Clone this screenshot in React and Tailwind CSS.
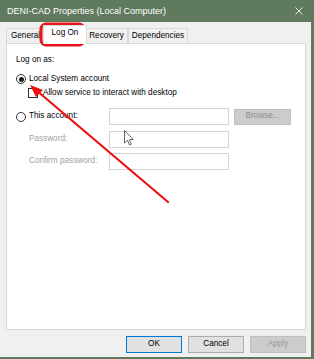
import React from 'react';

const font = { fontFamily: '"Liberation Sans", Arial, sans-serif' };

function Radio({ checked }) {
  return (
    <span className="w-[10px] h-[10px] rounded-full border border-[#333333] bg-white flex items-center justify-center shrink-0">
      {checked && <span className="w-[5px] h-[5px] rounded-full bg-[#1a1a1a]" />}
    </span>
  );
}

function Tab({ label, selected, w }) {
  if (selected) {
    return (
      <div className={`${w} h-[19px] -mx-[2px] -mb-px z-10 bg-white border border-b-0 border-[#d9d9d9] flex items-start justify-center pt-[3px] text-black`}>
        {label}
      </div>
    );
  }
  return (
    <div className={`${w} h-[15px] bg-[#f0f0f0] border border-b-0 border-[#d9d9d9] flex items-center justify-center text-black overflow-hidden whitespace-nowrap`}>
      {label}
    </div>
  );
}

function Button({ children, kind }) {
  const styles = {
    ok: 'border-[#0078d7] bg-[#e1e1e1] text-black',
    normal: 'border-[#adadad] bg-[#e1e1e1] text-black',
    off: 'border-[#bfbfbf] bg-[#cccccc] text-[#9a9a9a]',
  };
  return (
    <div className={`w-[56px] h-[17px] border flex items-center justify-center ${styles[kind]}`}>
      {children}
    </div>
  );
}

export default function App() {
  return (
    <div className="relative w-[314px] h-[359px] overflow-hidden bg-[#f0f0f0] border-r-[3px] border-b-[2px] border-[#5f7a5d] flex flex-col text-[8.2px] leading-none" style={font}>
      {/* title bar */}
      <div className="h-[22px] shrink-0 bg-[#5f7a5d] flex items-center justify-between pl-[7px] pr-[8px] text-[9px] text-white">
        <span>DENI-CAD Properties (Local Computer)</span>
        <svg width="8" height="8" viewBox="0 0 8 8" stroke="#e6ece6" strokeWidth="1">
          <path d="M0.5 0.5 L7.5 7.5 M7.5 0.5 L0.5 7.5" />
        </svg>
      </div>

      {/* tabs */}
      <div className="flex items-end h-[20px] mt-[1px] pl-[6px]">
        <Tab label="General" w="w-[39px]" />
        <Tab label="Log On" w="w-[44px]" selected />
        <Tab label="Recovery" w="w-[43px]" />
        <Tab label="Dependencies" w="w-[60px]" />
      </div>

      {/* panel */}
      <div className="ml-[6px] w-[300px] h-[287px] bg-white border border-[#d9d9d9] flex flex-col pl-[9px] text-black">
        <div className="h-[11px] mt-[11px] flex items-center">Log on as:</div>

        <div className="h-[10px] mt-[8px] flex items-center gap-[3px]">
          <Radio checked />
          <span>Local System account</span>
        </div>

        <div className="h-[10px] mt-[4px] ml-[12px] flex items-center gap-[5px]">
          <span className="w-[10px] h-[10px] border border-[#333333] bg-white shrink-0" />
          <span>Allow service to interact with desktop</span>
        </div>

        <div className="h-[17px] mt-[10px] flex items-center">
          <div className="w-[93px] flex items-center gap-[3px]">
            <Radio />
            <span>This account:</span>
          </div>
          <div className="w-[120px] h-[17px] border border-[#d4d4d4] bg-white" />
          <div className="ml-[5px] w-[57px] h-[16px] border border-[#bfbfbf] bg-[#cccccc] text-[#8c8c8c] flex items-center justify-center">
            Browse...
          </div>
        </div>

        <div className="h-[17px] mt-[6px] flex items-center">
          <span className="w-[93px] pl-[13px] text-[#a0a0a0]">Password:</span>
          <div className="w-[120px] h-[17px] border border-[#d4d4d4] bg-white" />
        </div>

        <div className="h-[17px] mt-[5px] flex items-center">
          <span className="w-[93px] pl-[13px] text-[#a0a0a0]">Confirm password:</span>
          <div className="w-[120px] h-[17px] border border-[#d4d4d4] bg-white" />
        </div>
      </div>

      {/* buttons */}
      <div className="mt-[6px] flex justify-end gap-[6px] pr-[5px]">
        <Button kind="ok">OK</Button>
        <Button kind="normal">Cancel</Button>
        <Button kind="off">Apply</Button>
      </div>

      {/* annotation overlay */}
      <svg className="absolute left-0 top-0 pointer-events-none" width="314" height="359" viewBox="0 0 314 359">
        <rect x="41" y="24" width="43" height="21" rx="5" fill="none" stroke="#e8141b" strokeWidth="3" />
        <line x1="168" y1="202" x2="36" y2="90" stroke="#f01010" strokeWidth="2.2" strokeLinecap="round" />
        <polygon points="30,85 43,90 36,97" fill="#f01010" />
        {/* mouse cursor */}
        <path d="M124.5 130.5 L124.5 143 L127.5 140.3 L129.6 145 L131.4 144.2 L129.3 139.6 L133.2 139.4 Z" fill="#ffffff" stroke="#555555" strokeWidth="0.9" strokeLinejoin="round" />
      </svg>
    </div>
  );
}
